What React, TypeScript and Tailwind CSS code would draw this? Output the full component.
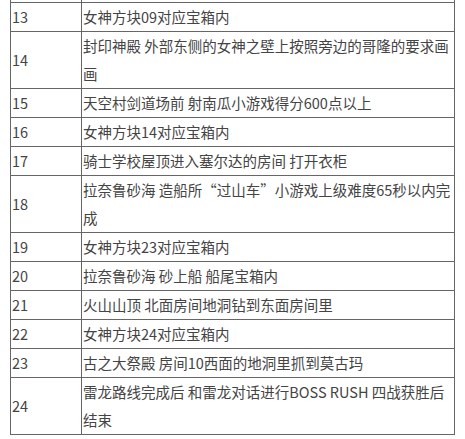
import React from "react";

interface Row {
  id: number;
  text: string;
}

const rows: Row[] = [
  { id: 13, text: "女神方块09对应宝箱内" },
  { id: 14, text: "封印神殿 外部东侧的女神之壁上按照旁边的哥隆的要求画画" },
  { id: 15, text: "天空村剑道场前 射南瓜小游戏得分600点以上" },
  { id: 16, text: "女神方块14对应宝箱内" },
  { id: 17, text: "骑士学校屋顶进入塞尔达的房间 打开衣柜" },
  { id: 18, text: "拉奈鲁砂海 造船所“过山车”小游戏上级难度65秒以内完成" },
  { id: 19, text: "女神方块23对应宝箱内" },
  { id: 20, text: "拉奈鲁砂海 砂上船 船尾宝箱内" },
  { id: 21, text: "火山山顶 北面房间地洞钻到东面房间里" },
  { id: 22, text: "女神方块24对应宝箱内" },
  { id: 23, text: "古之大祭殿 房间10西面的地洞里抓到莫古玛" },
  { id: 24, text: "雷龙路线完成后 和雷龙对话进行BOSS RUSH 四战获胜后结束" },
];

const App = () => {
  return (
    <div
      className="min-h-[439px] w-[465px] bg-white pl-[10px] text-[14.5px] leading-[28px] text-[#444]"
      style={{ fontFamily: '"Noto Sans CJK SC", "Noto Sans", sans-serif' }}
    >
      {/* tail of the previous row, cut off by the top edge */}
      <div className="flex h-[2px] w-[445px]">
        <div className="w-[72px] border-x border-[#666]" />
        <div className="flex-1 border-r border-[#666]" />
      </div>
      <table className="w-[445px] table-fixed border-collapse">
        <colgroup>
          <col className="w-[71px]" />
          <col />
        </colgroup>
        <tbody>
          {rows.map((row) => (
            <tr key={row.id}>
              <td className="border border-[#666] px-px py-0 align-middle">
                {row.id}
              </td>
              <td className="border border-[#666] px-px py-0 align-middle">
                {row.text}
              </td>
            </tr>
          ))}
        </tbody>
      </table>
    </div>
  );
};

export default App;
